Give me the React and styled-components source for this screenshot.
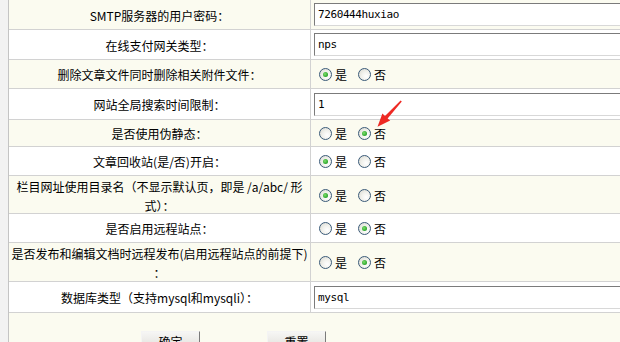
import styled, { createGlobalStyle } from "styled-components"

const GlobalStyle = createGlobalStyle`
    html, body {
        margin: 0;
        padding: 0;
        background: #f2f2f2;
        overflow: hidden;
    }
    body {
        font-family: "Noto Sans CJK SC", "Liberation Sans", sans-serif;
        font-size: 12px;
        color: #000;
    }
`

const rows = [
    { label: "SMTP服务器的用户密码：", type: "input", value: "7260444huxiao", h: 30 },
    { label: "在线支付网关类型：", type: "input", value: "nps", h: 30 },
    { label: "删除文章文件同时删除相关附件文件：", type: "radio", checked: 0, h: 29 },
    { label: "网站全局搜索时间限制：", type: "input", value: "1", h: 31 },
    { label: "是否使用伪静态：", type: "radio", checked: 1, h: 27 },
    { label: "文章回收站(是/否)开启：", type: "radio", checked: 0, h: 29 },
    { label: ["栏目网址使用目录名（不显示默认页，即是 /a/abc/ 形", "式）："], type: "radio", checked: 0, h: 38 },
    { label: "是否启用远程站点：", type: "radio", checked: 1, h: 29 },
    { label: ["是否发布和编辑文档时远程发布(启用远程站点的前提下)", "："], type: "radio", checked: 1, h: 39 },
    { label: "数据库类型（支持mysql和mysqli）：", type: "input", value: "mysql", h: 31 },
]

const Radio = ({ on, text }) => (
    <RadioItem>
        <RadioDot $on={on} />
        <span>{text}</span>
    </RadioItem>
)

export default function App() {
    return (
        <>
            <GlobalStyle />
            <Page>
                <Table>
                    {rows.map((row, i) => (
                        <Row key={i} $alt={i % 2 === 0} $h={row.h}>
                            <LabelCell>
                                {Array.isArray(row.label)
                                    ? row.label.map((line, j) => <div key={j}>{line}</div>)
                                    : row.label}
                            </LabelCell>
                            <ValueCell $radio={row.type === "radio"}>
                                {row.type === "input" ? (
                                    <TextInput>{row.value}</TextInput>
                                ) : (
                                    <RadioGroup>
                                        <Radio on={row.checked === 0} text="是" />
                                        <Radio on={row.checked === 1} text="否" />
                                    </RadioGroup>
                                )}
                            </ValueCell>
                        </Row>
                    ))}
                    <ButtonRow>
                        <Button>确定</Button>
                        <Button>重置</Button>
                    </ButtonRow>
                </Table>
                <Arrow viewBox="0 0 36 36" width="36" height="36">
                    <path
                        d="M29.6 4.4 L30.8 5.6 L16.6 22.4 L19.2 24.6 L6.5 30.8 L11.4 17.6 L14 19.9 Z"
                        fill="#ee2a24"
                    />
                </Arrow>
            </Page>
        </>
    )
}

const Page = styled.div`
    position: relative;
    padding-left: 8px;
    height: 342px;
    overflow: hidden;
`

const Table = styled.div`
    border-left: 1px solid #c4c4c4;
    background: #ffffff;
    height: 100%;
    display: flex;
    flex-direction: column;
`

const Row = styled.div`
    flex-shrink: 0;
    display: grid;
    grid-template-columns: 302px 1fr;
    height: ${p => p.$h}px;
    box-sizing: border-box;
    border-bottom: 1px solid #d2d2d2;
    background: ${p => (p.$alt ? "#fbfbf0" : "#ffffff")};
`

const LabelCell = styled.div`
    border-right: 1px solid #d2d2d2;
    display: flex;
    flex-direction: column;
    align-items: center;
    justify-content: center;
    text-align: center;
    line-height: 19px;
    white-space: nowrap;
    padding-top: 1px;
`

const ValueCell = styled.div`
    display: flex;
    align-items: center;
    overflow: hidden;
    padding-left: ${p => (p.$radio ? "8px" : "3px")};
`

const TextInput = styled.div`
    flex-shrink: 0;
    width: calc(100% + 10px);
    height: 23px;
    box-sizing: border-box;
    background: #fff;
    border: 1px solid;
    border-color: #7b7b7b #d8d8d8 #d8d8d8 #7b7b7b;
    font-family: "DejaVu Sans Mono", "Liberation Mono", monospace;
    font-size: 11px;
    letter-spacing: -0.4px;
    line-height: 21px;
    padding-left: 3px;
    color: #000;
`

const RadioGroup = styled.div`
    display: flex;
    align-items: center;
    gap: 11px;
`

const RadioItem = styled.label`
    display: flex;
    align-items: center;
    gap: 3px;
    font-size: 12px;
`

const RadioDot = styled.span`
    width: 13px;
    height: 13px;
    box-sizing: border-box;
    border-radius: 50%;
    border: 1px solid #3a5a78;
    background: radial-gradient(circle at 65% 65%, #ffffff 0%, #f1f1ec 45%, #d6d6ce 100%);
    position: relative;

    &::after {
        content: "";
        display: ${p => (p.$on ? "block" : "none")};
        position: absolute;
        left: 3px;
        top: 3px;
        width: 5px;
        height: 5px;
        border-radius: 50%;
        background: radial-gradient(circle at 40% 40%, #7ede6c 0%, #2aa42a 70%, #1d7e1d 100%);
    }
`

const ButtonRow = styled.div`
    flex: 1;
    background: #fbfbf0;
    display: flex;
    align-items: flex-start;
    gap: 67px;
    padding: 18px 0 0 132px;
    overflow: hidden;
`

const Button = styled.button`
    flex-shrink: 0;
    width: 59px;
    height: 22px;
    border: 1px solid;
    border-color: #f4f4f4 #7a7a7a #7a7a7a #f4f4f4;
    background: linear-gradient(#f6f6f4, #dedcd6);
    font-family: "Noto Sans CJK SC", sans-serif;
    font-size: 12px;
    line-height: 18px;
    padding: 0;
    color: #000;
`

const Arrow = styled.svg`
    position: absolute;
    left: 371px;
    top: 96px;
`
